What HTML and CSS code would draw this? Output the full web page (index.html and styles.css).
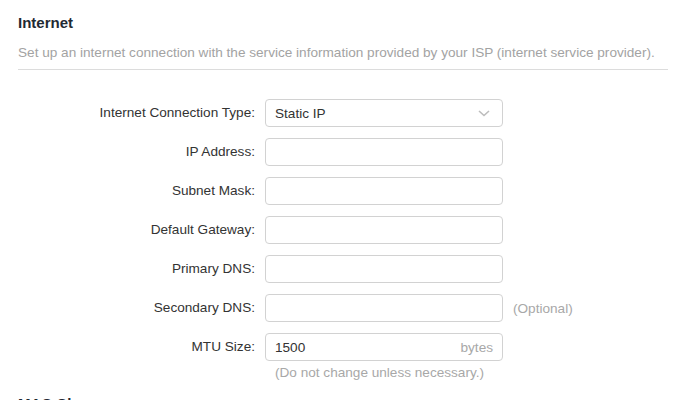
FILE: index.html
```
<!DOCTYPE html>
<html>
<head>
<meta charset="utf-8">
<link rel="stylesheet" href="styles.css">
</head>
<body>
<section class="section">
  <h2 class="title">Internet</h2>
  <p class="desc">Set up an internet connection with the service information provided by your ISP (internet service provider).</p>
  <div class="form">
    <label class="label">Internet Connection Type:</label>
    <div class="field select"><span class="value">Static IP</span>
      <svg class="chev" width="12" height="7" viewBox="0 0 12 7"><path d="M1 1 L6 5.5 L11 1" fill="none" stroke="#bdbdbd" stroke-width="1.6"/></svg>
    </div>
    <span></span>

    <label class="label">IP Address:</label>
    <div class="field"></div>
    <span></span>

    <label class="label">Subnet Mask:</label>
    <div class="field"></div>
    <span></span>

    <label class="label">Default Gateway:</label>
    <div class="field"></div>
    <span></span>

    <label class="label">Primary DNS:</label>
    <div class="field"></div>
    <span></span>

    <label class="label">Secondary DNS:</label>
    <div class="field"></div>
    <span class="aside">(Optional)</span>

    <label class="label">MTU Size:</label>
    <div class="field"><span class="value">1500</span><span class="unit">bytes</span></div>
    <span></span>
  </div>
  <p class="hint">(Do not change unless necessary.)</p>
</section>
<section class="section">
  <h2 class="title">MAC Clone</h2>
</section>
</body>
</html>
```
FILE: styles.css
```
html, body {
  margin: 0;
  padding: 0;
  background: #fff;
  font-family: "Liberation Sans", Arial, sans-serif;
  color: #333;
  overflow: hidden;
}
.section {
  padding: 0 22px 0 18px;
}
.title {
  margin: 13px 0 0;
  font-size: 15px;
  line-height: 20px;
  font-weight: bold;
  color: #1f2a33;
}
.desc {
  margin: 11px 0 0;
  padding-bottom: 7px;
  border-bottom: 1px solid #dcdcdc;
  font-size: 13.6px;
  line-height: 18px;
  color: #a3a3a3;
}
.form {
  margin-top: 29px;
  display: grid;
  grid-template-columns: 237px 238px auto;
  column-gap: 10px;
  row-gap: 11px;
  align-items: center;
}
.label {
  text-align: right;
  font-size: 13.6px;
  line-height: 18px;
  color: #333;
}
.field {
  box-sizing: border-box;
  height: 28px;
  border: 1px solid #d2d2d2;
  border-radius: 4px;
  display: flex;
  align-items: center;
  justify-content: space-between;
  padding: 0 9px;
  font-size: 13.6px;
}
.value {
  color: #333;
}
.unit {
  color: #a8a8a8;
}
.chev {
  margin-right: 3px;
  margin-top: 1px;
}
.aside {
  font-size: 13.6px;
  color: #a8a8a8;
}
.hint {
  margin: 3px 0 0 257px;
  font-size: 13.6px;
  line-height: 18px;
  color: #a8a8a8;
}
.section + .section .title {
  margin-top: 12px;
}
```
